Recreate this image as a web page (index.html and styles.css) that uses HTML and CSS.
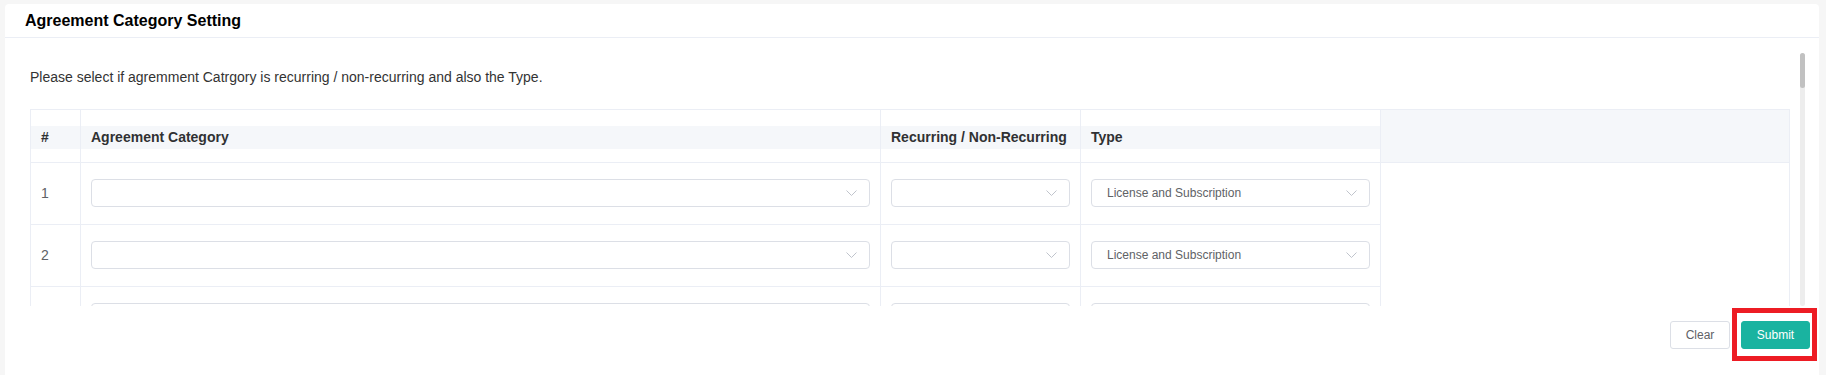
FILE: index.html
```html
<!DOCTYPE html>
<html lang="en">
<head>
    <meta charset="UTF-8">
    <meta name="viewport" content="width=device-width, initial-scale=1.0">
    <title>Agreement Category Setting</title>
    <link rel="stylesheet" href="styles.css">
</head>
<body>

    <div class="card">
        <div class="card-header">Agreement Category Setting</div>

        <div class="card-body">
            <div class="scroll-frame">
                <div class="scroll-area">
                    <p class="hint">Please select if agremment Catrgory is recurring / non-recurring and also the Type.</p>

                    <table class="category-table">
                        <colgroup>
                            <col class="col-no">
                            <col class="col-category">
                            <col class="col-recurring">
                            <col class="col-type">
                            <col>
                        </colgroup>
                        <thead>
                            <tr>
                                <th><div class="th-band">#</div></th>
                                <th><div class="th-band">Agreement Category</div></th>
                                <th><div class="th-band">Recurring / Non-Recurring</div></th>
                                <th><div class="th-band">Type</div></th>
                                <th class="th-blank"></th>
                            </tr>
                        </thead>
                        <tbody id="category-rows">
                            <!-- rows are added by the script below -->
                        </tbody>
                    </table>
                </div>
                <div class="scrollbar"><div class="scrollbar-thumb"></div></div>
            </div>

            <div class="actions">
                <button class="btn btn-plain">Clear</button>
                <span class="highlight">
                    <button class="btn btn-primary">Submit</button>
                </span>
            </div>
        </div>
    </div>

    <script>
        const rowCount = 3;
        const chevron = '<svg class="chevron" width="11" height="6" viewBox="0 0 11 6"><polyline points="0.5,0.5 5.5,5.5 10.5,0.5" fill="none" stroke="#c0c4cc" stroke-width="1"/></svg>';

        function selectBox(value) {
            return '<div class="select"><span class="select-value">' + (value || '') + '</span>' + chevron + '</div>';
        }

        const tbody = document.getElementById('category-rows');
        for (let i = 1; i <= rowCount; i++) {
            const row = tbody.insertRow();
            row.innerHTML =
                '<td class="cell-no">' + i + '</td>' +
                '<td>' + selectBox('') + '</td>' +
                '<td>' + selectBox('') + '</td>' +
                '<td>' + selectBox('License and Subscription') + '</td>' +
                (i === 1 ? '<td class="td-blank" rowspan="' + rowCount + '"></td>' : '');
        }
    </script>

</body>
</html>
```

FILE: styles.css
```css
html, body {
    margin: 0;
    height: 100%;
}
body {
    background-color: #f6f6f6;
    font-family: "Liberation Sans", Arial, sans-serif;
    color: #333;
    padding: 4px 7px 0 5px;
    box-sizing: border-box;
    overflow: hidden;
}
.card {
    background-color: #fff;
    border-radius: 4px;
    min-height: 400px;
}
.card-header {
    height: 33px;
    line-height: 33px;
    padding-left: 20px;
    font-size: 16px;
    font-weight: bold;
    color: #000;
    border-bottom: 1px solid #ebeef5;
}
.card-body {
    padding-top: 15px;
}
.scroll-frame {
    display: flex;
    height: 253px;
    margin: 0 14px 0 25px;
}
.scroll-area {
    flex: 1;
    overflow: hidden;
    padding-right: 10px;
}
.scrollbar {
    width: 5px;
    flex-shrink: 0;
    background-color: #ededed;
    border-radius: 3px;
}
.scrollbar-thumb {
    height: 35px;
    background-color: #c1c1c1;
    border-radius: 3px;
}
.hint {
    margin: 14px 0 22px 0;
    font-size: 14px;
    line-height: 20px;
    color: #333;
}
.category-table {
    width: 1760px;
    border-collapse: collapse;
    table-layout: fixed;
}
.col-no {
    width: 50px;
}
.col-category {
    width: 800px;
}
.col-recurring {
    width: 200px;
}
.col-type {
    width: 300px;
}
.category-table th,
.category-table td {
    border: 1px solid #ebeef5;
}
.category-table th {
    padding: 16px 0 13px 0;
    text-align: left;
    font-size: 14px;
    font-weight: bold;
    color: #303133;
}
.th-band {
    background-color: #f5f7fa;
    height: 23px;
    line-height: 23px;
    padding: 0 10px;
    white-space: nowrap;
}
.category-table th.th-blank {
    background-color: #f5f7fa;
    padding: 0;
}
.category-table td {
    padding: 16px 10px 17px 10px;
    height: 28px;
    vertical-align: middle;
}
.category-table td.cell-no {
    font-size: 14px;
    color: #606266;
}
.category-table td.td-blank {
    border-top: none;
    border-bottom: none;
    padding: 0;
}
.select {
    height: 28px;
    box-sizing: border-box;
    border: 1px solid #dcdfe6;
    border-radius: 4px;
    display: flex;
    align-items: center;
    justify-content: space-between;
    padding: 0 12px 0 15px;
    font-size: 12px;
    color: #606266;
}
.chevron {
    flex-shrink: 0;
}
.actions {
    display: flex;
    justify-content: flex-end;
    gap: 11px;
    padding: 15px 9px 0 0;
}
.btn {
    height: 28px;
    border-radius: 3px;
    font-family: "Liberation Sans", Arial, sans-serif;
    font-size: 12px;
    cursor: pointer;
    display: block;
}
.btn-plain {
    width: 60px;
    background-color: #fff;
    border: 1px solid #dcdfe6;
    color: #606266;
}
.btn-primary {
    width: 69px;
    background-color: #1ab3a0;
    border: 1px solid #1ab3a0;
    color: #fff;
}
.highlight {
    position: relative;
    display: block;
}
.highlight::after {
    content: "";
    position: absolute;
    left: -9px;
    right: -7px;
    top: -13px;
    bottom: -12px;
    border: 5px solid #ed1c24;
    pointer-events: none;
}
```
